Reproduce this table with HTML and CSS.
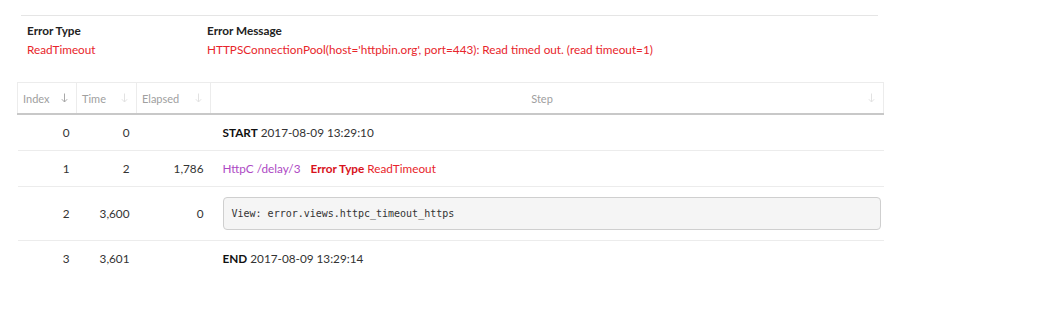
FILE: index.html
```html
<!DOCTYPE html>
<html>
<head>
<meta charset="utf-8">
<link rel="stylesheet" href="styles.css">
</head>
<body>
<div class="summary">
  <div class="sum-col type-col">
    <div class="sum-label">Error Type</div>
    <div class="sum-value">ReadTimeout</div>
  </div>
  <div class="sum-col">
    <div class="sum-label">Error Message</div>
    <div class="sum-value">HTTPSConnectionPool(host='httpbin.org', port=443): Read timed out. (read timeout=1)</div>
  </div>
</div>
<table class="steps">
  <thead>
    <tr>
      <th class="c-index"><span class="th-in"><span>Index</span><svg class="arrow dark" width="7" height="10" viewBox="0 0 7 10"><path d="M3.5 0.5V9M0.8 6.2L3.5 9L6.2 6.2" fill="none" stroke="currentColor" stroke-width="1"/></svg></span></th>
      <th class="c-time"><span class="th-in"><span>Time</span><svg class="arrow" width="7" height="10" viewBox="0 0 7 10"><path d="M3.5 0.5V9M0.8 6.2L3.5 9L6.2 6.2" fill="none" stroke="currentColor" stroke-width="1"/></svg></span></th>
      <th class="c-elapsed"><span class="th-in"><span>Elapsed</span><svg class="arrow" width="7" height="10" viewBox="0 0 7 10"><path d="M3.5 0.5V9M0.8 6.2L3.5 9L6.2 6.2" fill="none" stroke="currentColor" stroke-width="1"/></svg></span></th>
      <th class="c-step"><span class="th-in step-in"><span class="step-title">Step</span><svg class="arrow" width="7" height="10" viewBox="0 0 7 10"><path d="M3.5 0.5V9M0.8 6.2L3.5 9L6.2 6.2" fill="none" stroke="currentColor" stroke-width="1"/></svg></span></th>
    </tr>
  </thead>
  <tbody>
    <tr>
      <td class="num">0</td>
      <td class="num">0</td>
      <td class="num"></td>
      <td class="step"><b>START</b> 2017-08-09 13:29:10</td>
    </tr>
    <tr>
      <td class="num">1</td>
      <td class="num">2</td>
      <td class="num">1,786</td>
      <td class="step"><span class="httpc">HttpC /delay/3</span><span class="err"><b>Error Type</b> ReadTimeout</span></td>
    </tr>
    <tr class="tall">
      <td class="num">2</td>
      <td class="num">3,600</td>
      <td class="num">0</td>
      <td class="step"><pre class="code">View: error.views.httpc_timeout_https</pre></td>
    </tr>
    <tr class="last">
      <td class="num">3</td>
      <td class="num">3,601</td>
      <td class="num"></td>
      <td class="step"><b>END</b> 2017-08-09 13:29:14</td>
    </tr>
  </tbody>
</table>
</body>
</html>
```
FILE: styles.css
```css
html, body {
  margin: 0;
  padding: 0;
  background: #fff;
}
body {
  font-family: Lato, "Open Sans", "Liberation Sans", sans-serif;
  font-size: 11.75px;
  color: #333;
}
.summary {
  margin: 15px 0 0 21px;
  width: 857px;
  border-top: 1px solid #e5e5e5;
  display: flex;
  padding: 6px 0 0 6px;
  box-sizing: border-box;
}
.sum-col {
  display: flex;
  flex-direction: column;
}
.type-col {
  width: 180px;
}
.sum-label {
  font-weight: bold;
  color: #222;
  line-height: 18px;
}
.sum-value {
  color: #e8252b;
  line-height: 20px;
}
.steps {
  margin: 22px 0 0 17px;
  width: 867px;
  border-collapse: collapse;
  table-layout: fixed;
}
.steps th {
  height: 30px;
  padding: 0 5px;
  border: 1px solid #ececec;
  border-bottom: 2px solid #c8c8c8;
  font-weight: normal;
  color: #a0a0a0;
  font-size: 11px;
  text-align: left;
}
.c-index { width: 48px; }
.c-time { width: 49px; }
.c-elapsed { width: 63px; }
.th-in {
  display: flex;
  justify-content: space-between;
  align-items: center;
}
.step-in .step-title {
  flex: 1;
  text-align: center;
}
.arrow {
  color: #e2e2e2;
  margin-right: 3px;
  flex: none;
}
.arrow.dark {
  color: #a8a8a8;
}
.steps td {
  height: 35px;
  padding: 0 6px;
  border-bottom: 1px solid #ececec;
  color: #333;
}
.steps tr.tall td {
  height: 53px;
}
.steps tr.last td {
  border-bottom: none;
}
.steps td.num {
  text-align: right;
  padding-right: 7px;
}
.steps td.step {
  padding-left: 12px;
  padding-right: 3px;
}
.steps b {
  color: #111;
}
.httpc {
  color: #ad49c4;
  margin-right: 10px;
}
.err {
  color: #e8252b;
}
.err b {
  color: #d8121c;
}
.code {
  margin: 0;
  height: 33px;
  box-sizing: border-box;
  padding: 0 8px;
  display: flex;
  align-items: center;
  background: #f5f5f5;
  border: 1px solid #cfcfcf;
  border-radius: 4px;
  font-family: "DejaVu Sans Mono", "Liberation Mono", monospace;
  font-size: 10px;
  color: #333;
}
```
